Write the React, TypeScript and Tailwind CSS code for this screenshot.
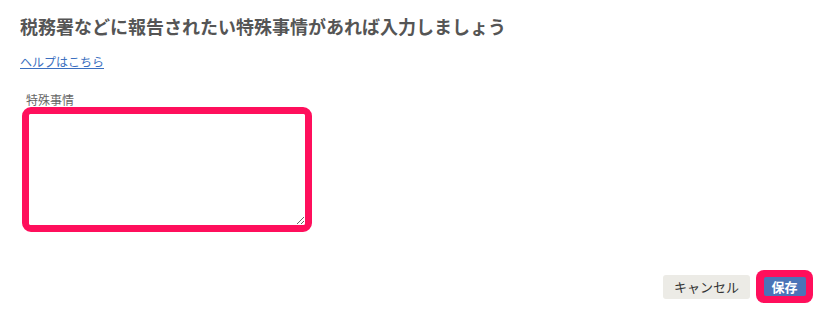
export default function App() {
  return (
    <div
      className="flex h-[314px] w-[825px] flex-col bg-white text-[#555]"
      style={{ fontFamily: '"Noto Sans CJK JP", "Noto Sans", sans-serif' }}
    >
      <div className="px-5 pt-[14px]">
        <h1 className="text-[18px] font-bold leading-[24px] text-[#555]">
          税務署などに報告されたい特殊事情があれば入力しましょう
        </h1>
        <a
          href="#"
          className="mt-[15px] inline-block text-[12px] leading-[18px] text-[#3b6fc0] underline"
        >
          ヘルプはこちら
        </a>
      </div>

      <div className="mt-[21px] pl-[22px]">
        <label className="ml-1 block text-[12px] leading-[14px] text-[#666]">特殊事情</label>
        <div className="h-[125px] w-[290px] rounded-[9px] border-[7px] border-[#ff0f5c] bg-white">
          <textarea className="h-full w-full resize-y rounded-[2px] border-0 bg-white p-1 text-[13px] outline-none" />
        </div>
      </div>

      <div className="mt-auto flex items-center justify-end gap-[6px] pb-[11px] pr-[12px]">
        <button className="h-[24px] w-[87px] rounded-[3px] bg-[#ecebe6] text-[13px] leading-[24px] text-[#333]">
          キャンセル
        </button>
        <div className="flex h-[33px] w-[57px] items-center justify-center rounded-[8px] bg-[#ff0f5c]">
          <button className="h-[19px] w-[42px] rounded-[2px] bg-[#4b74b8] text-[13px] font-bold leading-[19px] text-white">
            保存
          </button>
        </div>
      </div>
    </div>
  );
}
